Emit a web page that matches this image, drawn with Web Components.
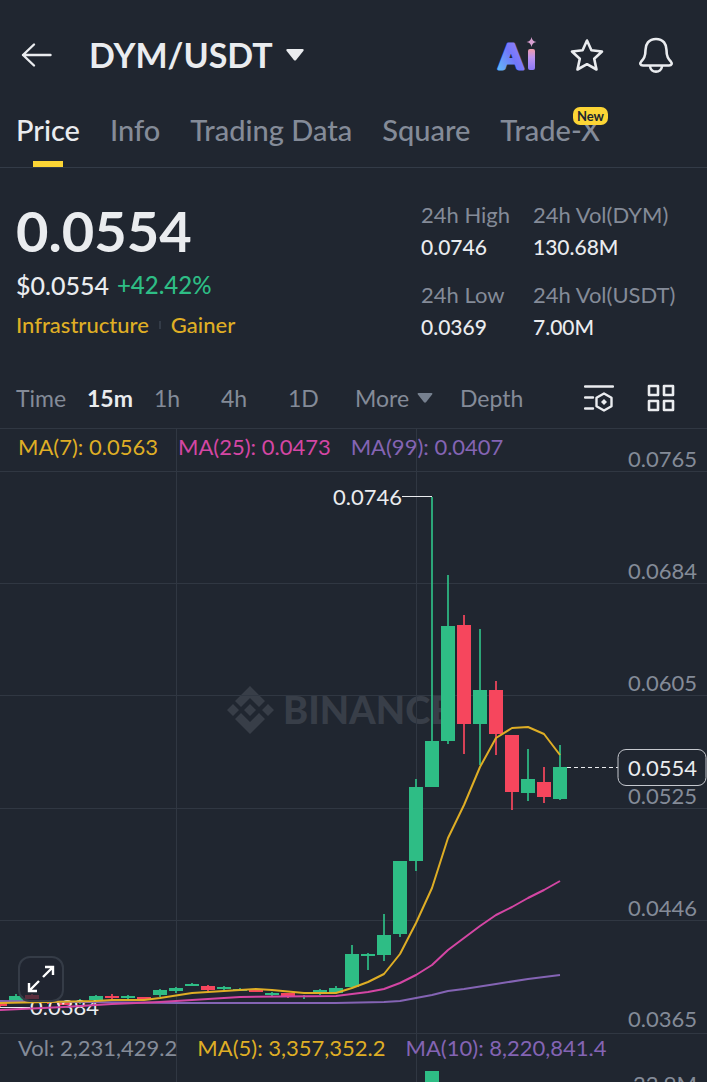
<!DOCTYPE html>
<html lang="en">
<head>
<meta charset="utf-8">
<meta name="viewport" content="width=device-width, initial-scale=1">
<title>DYM/USDT</title>
<style>
  :root {
    --bg: #202630;
    --line: #333b47;
    --text: #eaecef;
    --muted: #848b98;
    --up: #2ebd85;
    --down: #f6465d;
    --yellow: #fcd535;
    --gold: #dfae25;
    --pink: #d446a4;
    --purple: #8464b4;
  }
  body {
    margin: 0;
    background: var(--bg);
    color: var(--text);
    font-family: Lato, "Liberation Sans", sans-serif;
    font-size: 22px;
  }
</style>
</head>
<body>
<pair-page></pair-page>

<script>
const BUTTON_RESET = `
  button {
    margin: 0; padding: 0; border: 0; background: none;
    color: inherit; font: inherit; cursor: pointer;
  }
  svg { display: block; }
`;

function define(name, html, setup) {
  const template = document.createElement('template');
  template.innerHTML = html;
  customElements.define(name, class extends HTMLElement {
    constructor() {
      super();
      this.attachShadow({ mode: 'open' }).append(template.content.cloneNode(true));
    }
    connectedCallback() {
      if (setup) setup(this, this.shadowRoot);
    }
  });
}

/* ---------- header ---------- */

define('pair-header', `
  <style>
    ${BUTTON_RESET}
    :host { display: flex; align-items: center; height: 110px; padding: 0 33px 0 20px; }
    .pair { display: flex; align-items: center; gap: 12px; margin-left: 37px; font-size: 34px; font-weight: 700; line-height: 40px; }
    .actions { display: flex; align-items: center; gap: 34px; margin-left: auto; }
    .ai { overflow: visible; }
  </style>
  <button aria-label="Back">
    <svg width="32" height="32" viewBox="0 0 32 32" fill="none" stroke="#eaecef" stroke-width="2.4" stroke-linecap="round" stroke-linejoin="round">
      <path d="M30.500 16H3M14 5.500L3 16L14 26.500"/>
    </svg>
  </button>
  <button class="pair"><slot></slot>
    <svg width="20" height="12" viewBox="0 0 20 12" fill="#eaecef"><path d="M2.500 0h15q2 .3.8 2l-7.200 9q-1.100 1-2.200 0L1.700 2Q.5.300 2.500 0z"/></svg>
  </button>
  <div class="actions">
    <button aria-label="Ai">
      <svg class="ai" width="40" height="48" viewBox="0 0 40 48">
        <defs>
          <linearGradient id="a" x1="0" y1="1" x2="1" y2="0">
            <stop offset="0.100" stop-color="#62b5f5"/><stop offset=".5" stop-color="#7277fa"/><stop offset="1" stop-color="#a783f5"/>
          </linearGradient>
          <linearGradient id="i" x1="0" y1="0" x2="0" y2="1">
            <stop offset="0" stop-color="#f09aa8"/><stop offset=".4" stop-color="#bd94ee"/><stop offset="1" stop-color="#8a78f8"/>
          </linearGradient>
        </defs>
        <text x="3" y="38" font-size="34" font-weight="900" fill="url(#a)" stroke="url(#a)" stroke-width="3" stroke-linejoin="round">A</text>
        <rect x="32" y="18" width="7" height="21" rx="2" fill="url(#i)"/>
        <path d="M35.500 6Q36.200 10.300 40.500 11Q36.200 11.700 35.500 16Q34.800 11.700 30.500 11Q34.800 10.300 35.500 6z" fill="#d8a0d0"/>
      </svg>
    </button>
    <button aria-label="Favorite">
      <svg width="34" height="36" viewBox="0 0 34 36" fill="none" stroke="#eaecef" stroke-width="2.600" stroke-linejoin="round">
        <path d="M17 3.500L21.400 13.200L32 14.500L24.200 21.700L26.500 32.500L17 27.200L7.500 32.500L9.800 21.700L2 14.500L12.600 13.200z"/>
      </svg>
    </button>
    <button aria-label="Alerts">
      <svg width="36" height="38" viewBox="0 0 36 38" fill="none" stroke="#eaecef" stroke-width="2.600" stroke-linejoin="round">
        <path d="M18 3C10.500 3 7.500 8.500 7.500 14C7.500 21 5.500 23 3.200 25.500C1.500 27.500 2.300 29.500 5 29.500H31C33.700 29.500 34.500 27.500 32.800 25.500C30.500 23 28.500 21 28.500 14C28.500 8.500 25.500 3 18 3z"/>
        <path d="M12 30C12.500 37.500 23.500 37.500 24 30"/>
      </svg>
    </button>
  </div>
`);

/* ---------- tabs ---------- */

define('pair-tab', `
  <style>
    ${BUTTON_RESET}
    :host { display: block; position: relative; color: var(--muted); font-size: 29px; font-weight: 500; }
    :host([active]) { color: var(--text); }
    button { display: flex; flex-direction: column; align-items: center; height: 57px; line-height: 40px; white-space: nowrap; }
    :host([active]) button::after { content: ""; width: 30px; height: 6px; margin-top: 11px; background: var(--yellow); }
    .badge {
      position: absolute; right: -8px; top: -3px; padding: 0 4px; border-radius: 7px;
      background: var(--yellow); color: #202630; font-size: 13px; font-weight: 700; line-height: 18px;
    }
    .badge:empty { display: none; }
  </style>
  <button role="tab"><slot></slot></button><span class="badge"></span>
`, (host, root) => {
  root.querySelector('.badge').textContent = host.getAttribute('badge') || '';
});

define('pair-tabs', `
  <style>
    :host { display: flex; gap: 30px; padding: 0 16px; border-bottom: 1px solid var(--line); }
  </style>
  <slot></slot>
`);

/* ---------- price summary ---------- */

define('price-stat', `
  <style>
    :host { display: block; line-height: 32px; font-size: 21px; font-weight: 500; white-space: nowrap; }
    .label { color: var(--muted); font-weight: 400; font-size: 22px; }
  </style>
  <div class="label"></div>
  <div><slot></slot></div>
`, (host, root) => {
  root.querySelector('.label').textContent = host.getAttribute('label');
});

define('price-summary', `
  <style>
    :host { display: grid; grid-template-columns: 1fr 270px; padding: 31px 16px 25px; }
    .last { font-size: 56px; font-weight: 700; line-height: 64px; }
    .fiat { display: flex; gap: 8px; line-height: 44px; font-size: 25px; font-weight: 500; }
    .change { color: var(--up); font-size: 24px; }
    .tags { display: flex; align-items: center; gap: 10px; line-height: 36px; font-weight: 500; }
    .tags a { color: var(--gold); text-decoration: none; }
    .tags i { width: 2px; height: 8px; background: var(--line); }
    .stats { display: grid; grid-template-columns: 112px 1fr; row-gap: 16px; }
  </style>
  <div>
    <div class="last">0.0554</div>
    <div class="fiat"><span>$0.0554</span><span class="change">+42.42%</span></div>
    <div class="tags"><a href="#infrastructure">Infrastructure</a><i></i><a href="#gainer">Gainer</a></div>
  </div>
  <div class="stats">
    <price-stat label="24h High">0.0746</price-stat>
    <price-stat label="24h Vol(DYM)">130.68M</price-stat>
    <price-stat label="24h Low">0.0369</price-stat>
    <price-stat label="24h Vol(USDT)">7.00M</price-stat>
  </div>
`);

/* ---------- interval bar ---------- */

define('interval-bar', `
  <style>
    ${BUTTON_RESET}
    :host {
      display: grid; grid-template-columns: 71px repeat(4, 67px) 105px 1fr auto; align-items: center;
      height: 60px; padding: 0 32px 0 16px; color: var(--muted); font-size: 23px;
    }
    button { justify-self: start; line-height: 28px; }
    .on { color: var(--text); font-weight: 700; }
    .more { display: flex; align-items: center; gap: 8px; }
    .tools { display: flex; align-items: center; gap: 33px; }
  </style>
  <button>Time</button>
  <button class="on">15m</button>
  <button>1h</button>
  <button>4h</button>
  <button>1D</button>
  <button class="more">More
    <svg width="16" height="10" viewBox="0 0 16 10" fill="#76808f"><path d="M1.500 0h13q1.500.2.600 1.500L9 9.200q-1 .9-2 0L.9 1.500Q0 .2 1.500 0z"/></svg>
  </button>
  <button>Depth</button>
  <div class="tools">
    <button aria-label="Indicators">
      <svg width="30" height="28" viewBox="0 0 30 28" fill="none" stroke="#eaecef" stroke-width="2.400">
        <path d="M1 2.500H29M1 13.500H9M1 24.500H9" stroke-linecap="round"/>
        <path d="M20 9.500L27.500 13.700V22.300L20 26.500L12.500 22.300V13.700z" stroke-linejoin="round"/>
        <path d="M20 15L23 18L20 21L17 18z" fill="#eaecef" stroke="none"/>
      </svg>
    </button>
    <button aria-label="Layout">
      <svg width="28" height="28" viewBox="0 0 28 28" fill="none" stroke="#eaecef" stroke-width="2.600" stroke-linejoin="round">
        <rect x="2" y="2" width="9" height="9"/><rect x="17" y="2" width="9" height="9"/>
        <rect x="2" y="17" width="9" height="9"/><rect x="17" y="17" width="9" height="9"/>
      </svg>
    </button>
  </div>
`);

/* ---------- indicator legend ---------- */

define('indicator-legend', `
  <style>
    :host { display: flex; gap: 20px; padding: 0 18px; line-height: 30px; white-space: nowrap; }
    ::slotted(.gray) { color: var(--muted); }
    ::slotted(.gold) { color: var(--gold); }
    ::slotted(.pink) { color: var(--pink); }
    ::slotted(.purple) { color: var(--purple); }
  </style>
  <slot></slot>
`);

/* ---------- candles ---------- */

const STEP = 16;
const BODY = 14;
const GRID_X = [176, 416];

const AXIS = [
  [43, '0.0765'], [155, '0.0684'], [267, '0.0605'], [380, '0.0525'], [492, '0.0446'], [603, '0.0365']
];

// one row per candle: direction, high, body top, body bottom, low
const CANDLES = [
  ['d', 574, 575, 578, 579], ['u', 566, 568, 573, 573], ['d', 566, 567, 571, 571], ['d', 572, 573, 575, 576],
  ['d', 574, 575, 577, 577], ['u', 571, 573, 575, 576], ['u', 567, 568, 572, 573], ['d', 566, 568, 570, 572],
  ['u', 567, 568, 570, 573], ['d', 569, 569, 571, 572], ['u', 561, 562, 567, 569], ['u', 559, 560, 563, 565],
  ['u', 555, 556, 558, 558], ['d', 557, 558, 562, 563], ['u', 558, 559, 561, 562], ['u', 560, 561, 563, 563],
  ['d', 561, 562, 564, 564], ['u', 564, 565, 567, 568], ['d', 565, 565, 569, 570], ['u', 567, 568, 569, 571],
  ['u', 561, 562, 566, 567], ['u', 558, 560, 565, 565], ['u', 517, 526, 559, 560], ['u', 525, 526, 528, 542],
  ['u', 486, 507, 527, 533], ['u', 433, 433, 506, 509], ['u', 351, 359, 433, 443], ['u', 69, 313, 359, 359],
  ['u', 147, 198, 313, 316], ['d', 187, 197, 296, 326], ['u', 201, 262, 296, 337], ['d', 253, 262, 306, 327],
  ['d', 307, 307, 364, 382], ['u', 321, 351, 365, 373], ['d', 339, 354, 369, 375], ['u', 317, 339, 371, 372]
];

const AVERAGES = {
  gold: '0,575 48,574 96,573 112,572 144,572 160,570 192,565 208,564 240,562 256,561 272,562 304,565 336,565 352,560 368,554 384,546 400,526 416,495 432,460 448,410 464,377 480,339 496,310 512,300 528,299 544,306 560,327',
  pink: '0,582 64,579 112,576 160,574 208,571 240,569 336,568 352,566 368,564 384,561 400,555 416,547 432,537 448,522 464,510 480,498 496,487 512,479 528,470 544,462 560,453',
  purple: '0,573 80,574 176,575 336,575 384,574 400,573 416,570 432,567 448,563 464,561 496,556 528,551 560,547'
};

function drawCandle([dir, high, top, bottom, low], i) {
  const x = i * STEP;
  return `<g class="${dir}"><path d="M${x} ${high}V${low}"/>` +
    `<rect x="${x - BODY / 2}" y="${top}" width="${BODY}" height="${bottom - top}"/></g>`;
}

define('kline-chart', `
  <style>
    ${BUTTON_RESET}
    :host { display: block; position: relative; }
    svg.plot { width: 100%; height: auto; font-size: 22px; }
    .grid { stroke: #303742; stroke-width: 1; }
    .axis { fill: var(--muted); text-anchor: end; }
    .mark { fill: var(--text); }
    .u { fill: var(--up); stroke: var(--up); }
    .d { fill: var(--down); stroke: var(--down); }
    .u path, .d path { stroke-width: 2; opacity: .85; }
    .u rect, .d rect { stroke: none; }
    .ma polyline { fill: none; stroke-width: 2; stroke-linejoin: round; }
    .watermark { fill: #383e48; }
    .watermark text { font-size: 38px; font-weight: 900; }
    indicator-legend { position: absolute; left: 0; top: 4px; }
    .expand {
      position: absolute; left: 18px; bottom: 31px; width: 46px; height: 46px;
      display: grid; place-items: center;
      border: 2px solid #353c47; border-radius: 12px; background: #202630b8;
    }
  </style>
  <svg class="plot" viewBox="0 0 707 605" role="img" aria-label="15 minute candles">
    <g class="watermark">
      <path d="M250 258l15 15-6 6-9-9-9 9-6-6zM250 306l15-15-6-6-9 9-9-9-6 6zM227 282l6-6 6 6-6 6zM262 282l6-6 6 6-6 6zM244 282l6-6 6 6-6 6z"/>
      <text x="283" y="296">BINANCE</text>
    </g>
    <g class="grid"></g>
    <g class="candles"></g>
    <path d="M402 68.500H432M0 579.500H30" stroke="#eaecef"/>
    <text class="mark" x="402" y="77" text-anchor="end">0.0746</text>
    <text class="mark" x="30" y="587">0.0384</text>
    <g class="ma"></g>
    <g class="axis"></g>
    <path d="M567 339.500H618" stroke="#eaecef" stroke-dasharray="4 3"/>
    <rect x="618" y="321.500" width="88" height="36" rx="8" fill="#202630" stroke="#c5c8ce"/>
    <text class="mark" x="697" y="348" text-anchor="end">0.0554</text>
  </svg>
  <indicator-legend>
    <span class="gold">MA(7): 0.0563</span>
    <span class="pink">MA(25): 0.0473</span>
    <span class="purple">MA(99): 0.0407</span>
  </indicator-legend>
  <button class="expand" aria-label="Full screen">
    <svg width="28" height="28" viewBox="0 0 28 28" fill="none" stroke="#fff" stroke-width="2.400">
      <path d="M16 12L26 2M18 2H26V10M12 16L2 26M2 18V26H10"/>
    </svg>
  </button>
`, (host, root) => {
  const put = (selector, html) => { root.querySelector(selector).innerHTML = html; };

  put('.grid',
    `<path d="M0 .5H707"/>` +
    AXIS.slice(0, 5).map(([y]) => `<path d="M0 ${y}.5H707"/>`).join('') +
    GRID_X.map(x => `<path d="M${x}.5 0V605"/>`).join(''));
  put('.axis', AXIS.map(([y, price]) => `<text x="697" y="${y - 4}">${price}</text>`).join(''));
  put('.candles', CANDLES.map(drawCandle).join(''));
  put('.ma', ['purple', 'pink', 'gold'].map(c =>
    `<polyline points="${AVERAGES[c]}" style="stroke: var(--${c})"/>`).join(''));
});

define('volume-chart', `
  <style>
    :host { display: block; position: relative; overflow: hidden; }
    svg { display: block; width: 100%; height: auto; font-size: 22px; }
    indicator-legend { position: absolute; left: 0; top: 0; }
  </style>
  <svg viewBox="0 0 707 120" role="img" aria-label="Volume">
    <path d="M0 .5H707M176.500 0V120M416.500 0V120" stroke="#303742"/>
    <rect x="425" y="38" width="14" height="82" fill="#2ebd85"/>
    <text x="697" y="59" text-anchor="end" fill="#848b98">22.9M</text>
  </svg>
  <indicator-legend>
    <span class="gray">Vol: 2,231,429.2</span>
    <span class="gold">MA(5): 3,357,352.2</span>
    <span class="purple">MA(10): 8,220,841.4</span>
  </indicator-legend>
`);

/* ---------- page ---------- */

define('pair-page', `
  <style>
    :host { display: flex; flex-direction: column; height: 100vh; overflow: hidden; }
    :host > * { flex: none; }
    volume-chart { flex: 1 1 0; }
  </style>
  <pair-header>DYM/USDT</pair-header>
  <pair-tabs role="tablist">
    <pair-tab active>Price</pair-tab>
    <pair-tab>Info</pair-tab>
    <pair-tab>Trading Data</pair-tab>
    <pair-tab>Square</pair-tab>
    <pair-tab badge="New">Trade-X</pair-tab>
  </pair-tabs>
  <price-summary></price-summary>
  <interval-bar></interval-bar>
  <kline-chart></kline-chart>
  <volume-chart></volume-chart>
`);
</script>
</body>
</html>
